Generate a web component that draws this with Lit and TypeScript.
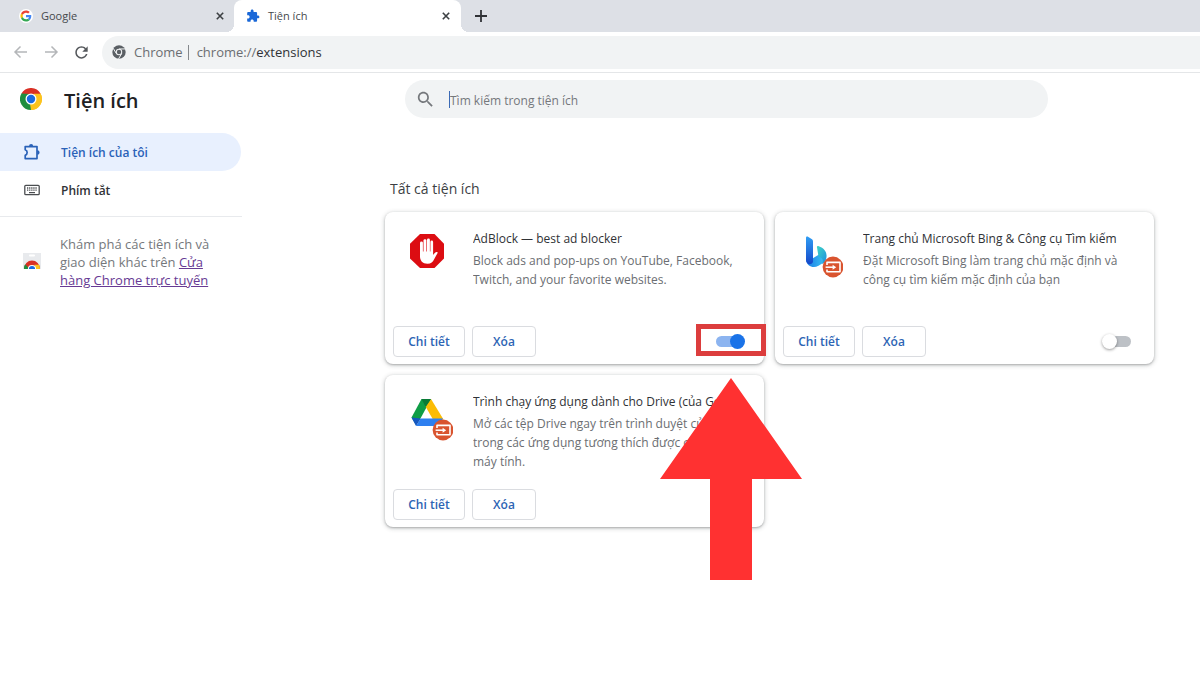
import { LitElement, html, css, svg, nothing } from "lit";
import { customElement, property } from "lit/decorators.js";

const googleG = html`<svg class="ico16" viewBox="0 0 48 48" aria-hidden="true">
  <circle cx="24" cy="24" r="24" fill="#fff" />
  <g transform="translate(5 5) scale(.79)">
    <path fill="#EA4335" d="M24 9.5c3.54 0 6.71 1.22 9.21 3.6l6.85-6.85C35.9 2.38 30.47 0 24 0 14.62 0 6.51 5.38 2.56 13.22l7.98 6.19C12.43 13.72 17.74 9.5 24 9.5z" />
    <path fill="#4285F4" d="M46.98 24.55c0-1.57-.15-3.09-.38-4.55H24v9.02h12.94c-.58 2.96-2.26 5.48-4.78 7.18l7.73 6c4.51-4.18 7.09-10.36 7.09-17.65z" />
    <path fill="#FBBC05" d="M10.53 28.59c-.48-1.45-.76-2.99-.76-4.59s.27-3.14.76-4.59l-7.98-6.19C.92 16.46 0 20.12 0 24c0 3.88.92 7.54 2.56 10.78l7.97-6.19z" />
    <path fill="#34A853" d="M24 48c6.48 0 11.93-2.13 15.89-5.81l-7.73-6c-2.15 1.45-4.92 2.3-8.16 2.3-6.26 0-11.57-4.22-13.47-9.91l-7.98 6.19C6.51 42.62 14.62 48 24 48z" />
  </g>
</svg>`;

const puzzle = html`<svg class="ico16" viewBox="0 0 24 24" aria-hidden="true">
  <path fill="#1a68d8" d="M20.5 11H19V7c0-1.1-.9-2-2-2h-4V3.5C13 2.12 11.88 1 10.5 1S8 2.12 8 3.5V5H4c-1.1 0-1.99.9-1.99 2v3.8H3.5c1.49 0 2.7 1.21 2.7 2.7s-1.21 2.7-2.7 2.7H2V20c0 1.1.9 2 2 2h3.8v-1.5c0-1.49 1.21-2.7 2.7-2.7 1.49 0 2.7 1.21 2.7 2.7V22H17c1.1 0 2-.9 2-2v-4h1.5c1.38 0 2.5-1.12 2.5-2.5S21.88 11 20.5 11z" />
</svg>`;

const closeIcon = html`<svg width="8" height="8" viewBox="0 0 8 8" aria-hidden="true">
  <path d="M.8.8l6.4 6.4M7.2.8L.8 7.2" stroke="#3c4043" stroke-width="1.6" />
</svg>`;

const chromeColor = html`<svg width="22" height="22" viewBox="0 0 48 48" aria-hidden="true">
  <path fill="#d93025" d="M24 24L3.2 12A24 24 0 0 1 44.8 12z" />
  <path fill="#fcc31e" d="M24 24L44.8 12A24 24 0 0 1 24 48z" />
  <path fill="#1e8e3e" d="M24 24V48A24 24 0 0 1 3.2 12z" />
  <path fill="#d93025" d="M24 12.5H45L34 30z" />
  <path fill="#fcc31e" d="M34 29.8L24 48 22 35.4z" />
  <path fill="#1e8e3e" d="M14 29.8L3.2 12 22 13 14 18z" />
  <path fill="#fcc31e" d="M45 12.5H30L34 30 24 48A24 24 0 0 0 45 12.5z" />
  <circle cx="24" cy="24" r="12" fill="#fff" />
  <circle cx="24" cy="24" r="9.2" fill="#1a6be0" />
</svg>`;

const chromeGrey = html`<svg width="14" height="14" viewBox="0 0 48 48" aria-hidden="true">
  <circle cx="24" cy="24" r="23" fill="#5a5f64" />
  <circle cx="24" cy="24" r="11" fill="#f1f3f4" />
  <circle cx="24" cy="24" r="7.5" fill="#5a5f64" />
  <path d="M24 13.5H46M33.2 29.2L22.5 47.5M14.8 29.2L4 11" stroke="#f1f3f4" stroke-width="3.4" />
</svg>`;

const extOutline = html`<svg width="18" height="18" viewBox="0 0 18 18" aria-hidden="true">
  <path fill="none" stroke="#2a62b8" stroke-width="1.7" stroke-linejoin="round" d="M2.2 3.6H14V15.6H2.2V12.4C4.8 11.6 4.8 7.6 2.2 6.8z" />
  <path fill="#2a62b8" d="M6 3.4a2.1 2.4 0 0 1 4.2 0zM14.2 7.2a2.4 2.3 0 0 1 0 4.6z" />
</svg>`;

const keyboardIcon = html`<svg width="18" height="12" viewBox="0 0 18 12" aria-hidden="true">
  <rect x="1.8" y="1.3" width="14.4" height="9.4" rx="1" fill="none" stroke="#4a4d50" stroke-width="1.3" />
  <path d="M4 4h10M4 6.2h10" stroke="#4a4d50" stroke-width="1.3" stroke-dasharray="1.3 .8" />
  <path d="M6 8.6h6" stroke="#4a4d50" stroke-width="1.2" />
</svg>`;

const storeIcon = html`<svg width="18" height="17" viewBox="0 0 18 17" aria-hidden="true">
  <path fill="#e8eaed" d="M0 1h18v16H0z" />
  <rect x="6" y="2.6" width="6" height="1.8" rx=".9" fill="#fff" />
  <path fill="#d93025" d="M1 17a8 8.4 0 0 1 16 0z" />
  <path fill="#1e8e3e" d="M1 17c0-2 .4-3.4 1.2-4.7L6.5 17z" />
  <path fill="#fcc31e" d="M12 17l-.5-4.2h4.6c.6 1.2.9 2.6.9 4.2z" />
  <path fill="#fff" d="M4.9 17a4.1 4.1 0 0 1 8.2 0z" />
  <path fill="#1a6be0" d="M5.9 17a3.1 3.1 0 0 1 6.2 0z" />
</svg>`;

const badge = svg`<circle cx="35" cy="33" r="10.4" fill="#d9542f" />
  <path d="M29 31v-2.6h13v9.4H29V35.4" fill="none" stroke="#fff" stroke-width="1.6" stroke-linejoin="round" />
  <path d="M27.6 33.2h8" stroke="#fff" stroke-width="1.5" />
  <path d="M34.6 30.7l3.6 2.5-3.6 2.5z" fill="#fff" />`;

const adblockArt = html`<svg width="46" height="46" viewBox="0 0 46 46" aria-hidden="true">
  <path fill="#dc0d12" d="M13 0H27.5L37 9.8V24.6L27.5 34H13L3 24.6V9.8z" />
  <g fill="#fff" transform="translate(0 -1)">
    <rect x="13" y="8.4" width="2.9" height="16" rx="1.4" />
    <rect x="16.5" y="6.2" width="2.9" height="18" rx="1.4" />
    <rect x="20" y="5.6" width="2.9" height="18" rx="1.4" />
    <rect x="23.4" y="7.6" width="2.7" height="18" rx="1.3" />
    <path d="M13 18.5h13v3.4c1.3-1.6 2.2-2.7 3.7-3 .8-.1 1.2.4.9 1L27 26.4c-1.2 2.4-2.8 4.3-6.5 4.3-5 0-7.5-2.8-7.5-7.4z" />
  </g>
</svg>`;

const bingArt = html`<svg width="46" height="46" viewBox="0 0 46 46" aria-hidden="true">
  <defs>
    <linearGradient id="stem" x1="0" y1="0" x2="0" y2="1"><stop offset="0" stop-color="#2f9df4" /><stop offset="1" stop-color="#1548c9" /></linearGradient>
    <linearGradient id="bowl" x1="0" y1="0" x2="1" y2="1"><stop offset="0" stop-color="#3fd6c4" /><stop offset="1" stop-color="#1b8de0" /></linearGradient>
    <linearGradient id="base" x1="0" y1="0" x2="1" y2="0"><stop offset="0" stop-color="#1a7ae6" /><stop offset="1" stop-color="#3cc5f2" /></linearGradient>
  </defs>
  <g transform="translate(1 0)">
    <path fill="url(#base)" d="M8 26c1 6 7 9 12.5 5.8L27.5 27.5 21 20.5 12 26z" />
    <path fill="url(#stem)" d="M8 4c0-1.6 1.2-1.8 2.4-1l3.2 2c1 .6 1.4 1.4 1.4 2.6V28c-2 3.8-7 2.4-7-2z" />
    <path fill="url(#bowl)" d="M19 13.5c-.5-1.2.6-1.8 1.8-1.2 5.2 2 8.2 5.2 7.7 10.7-.2 3-1.8 5.6-4.5 7.2 1.7-3.6.5-5.7-1.5-6.7l-2-1z" />
  </g>
  <g transform="translate(1 0)">${badge}</g>
</svg>`;

const driveArt = html`<svg width="46" height="46" viewBox="0 0 46 46" aria-hidden="true">
  <path fill="#0f9d46" d="M14.5 2H24L14 20.5 9 28 4.5 20.5z" />
  <path fill="#fbbc05" d="M24 2L36.5 22.5H26L18.5 9.5z" />
  <path fill="#0a7a36" d="M14.5 2H24L18.7 10z" />
  <path fill="#2d7ff0" d="M13.5 21.5H36L31.5 29H9z" />
  <path fill="#1557c0" d="M4.5 20.5L9 29 13.5 21.5z" />
  <g transform="translate(1 0)">${badge}</g>
</svg>`;

@customElement("extension-card")
class ExtensionCard extends LitElement {
  @property() name = "";
  @property() description = "";
  @property({ attribute: false }) art: unknown = nothing;
  @property({ type: Boolean }) on = false;
  @property({ type: Boolean }) marked = false;

  static styles = css`
    :host {
      display: flex;
      flex-direction: column;
      position: relative;
      box-sizing: border-box;
      min-height: 152px;
      padding: 17px 5px 7px 8px;
      border-radius: 8px;
      background: #fff;
      box-shadow: 0 1px 2px rgba(60, 64, 67, 0.3), 0 1px 4px 1px rgba(60, 64, 67, 0.2);
      font-size: 12px;
    }
    :host([marked]) { z-index: 1; }
    .top { display: flex; flex: 1; padding-left: 14px; }
    .art { flex: none; width: 46px; height: 46px; margin: 5px 20px 0 0; }
    .art svg { display: block; }
    .copy { flex: 1; min-width: 0; }
    .name {
      margin: 0 0 2px;
      font-size: 12px;
      line-height: 20px;
      font-weight: 400;
      color: #303236;
      white-space: nowrap;
      overflow: hidden;
      text-overflow: ellipsis;
    }
    .description {
      margin: 0;
      line-height: 19px;
      max-height: 57px;
      overflow: hidden;
      white-space: pre-line;
      color: #6b6e72;
    }
    .actions { display: flex; align-items: center; gap: 7px; }
    .action {
      height: 31px;
      padding: 0;
      border: 1px solid #dadce0;
      border-radius: 4px;
      background: #fff;
      font: 600 12px "Open Sans", "Noto Sans", sans-serif;
      color: #2d64b4;
    }
    .action.wide { min-width: 72px; }
    .action.narrow { min-width: 64px; }
    .toggle {
      appearance: none;
      position: relative;
      width: 33px;
      height: 15px;
      margin: 0 14px 0 auto;
    }
    .toggle::before {
      content: "";
      position: absolute;
      inset: 2px 4px;
      border-radius: 6px;
      background: #bdc1c6;
    }
    .toggle::after {
      content: "";
      position: absolute;
      left: 0;
      top: 0;
      width: 15px;
      height: 15px;
      border-radius: 50%;
      background: #fff;
      box-shadow: 0 1px 3px rgba(0, 0, 0, 0.4);
    }
    .toggle:checked::before { background: #8cb4f0; }
    .toggle:checked::after { left: auto; right: 0; background: #1a73e8; box-shadow: none; }
    .frame {
      position: absolute;
      right: -2px;
      bottom: 8px;
      box-sizing: border-box;
      width: 70px;
      height: 32px;
      border: 5px solid #dc3d3d;
      pointer-events: none;
    }
    .arrow { position: absolute; right: -38px; top: 166px; pointer-events: none; }
  `;

  render() {
    return html`
      <div class="top">
        <div class="art">${this.art}</div>
        <div class="copy">
          <h3 class="name" id="name">${this.name}</h3>
          <p class="description">${this.description}</p>
        </div>
      </div>
      <div class="actions">
        <button class="action wide">Chi tiết</button>
        <button class="action narrow">Xóa</button>
        <input class="toggle" type="checkbox" role="switch" aria-labelledby="name" .checked=${this.on} />
      </div>
      ${this.marked
        ? html`<div class="frame"></div>
            <svg class="arrow" width="142" height="202" viewBox="0 0 142 202" aria-hidden="true">
              <path fill="#ff3131" d="M71 0L142 101H92V202H50V101H0z" />
            </svg>`
        : nothing}
    `;
  }
}

@customElement("app-root")
class AppRoot extends LitElement {
  static styles = css`
    :host {
      display: block;
      min-height: 100vh;
      background: #fff;
      font-family: "Open Sans", "Noto Sans", sans-serif;
      color: #202124;
    }
    button { padding: 0; border: 0; background: none; font: inherit; color: inherit; }
    svg { display: block; flex: none; }
    .ico16 { width: 14px; height: 14px; }
    .tabs { display: flex; align-items: stretch; height: 32px; background: #dde0e6; }
    .tab {
      display: flex;
      align-items: center;
      box-sizing: border-box;
      width: 234px;
      padding: 0 10px 0 19px;
      font-size: 11px;
      color: #45484c;
    }
    .tab.active {
      position: relative;
      width: 227px;
      padding: 0 11px 0 12px;
      border-radius: 8px 8px 0 0;
      background: #fff;
    }
    .tab.active::before, .tab.active::after {
      content: "";
      position: absolute;
      bottom: 0;
      width: 8px;
      height: 8px;
    }
    .tab.active::before { right: 100%; background: radial-gradient(circle at 0 0, transparent 8px, #fff 8px); }
    .tab.active::after { left: 100%; background: radial-gradient(circle at 100% 0, transparent 8px, #fff 8px); }
    .tab-name { display: flex; align-items: center; flex: 1; gap: 8px; }
    .tab-name span { padding-bottom: 2px; }
    .new-tab { padding: 0 14px; }
    .toolbar {
      display: flex;
      align-items: center;
      height: 40px;
      padding-left: 13px;
      border-bottom: 1px solid #e4e6e8;
    }
    .nav { display: flex; gap: 14px; align-items: center; margin-right: 12px; }
    .address {
      display: flex;
      align-items: center;
      flex: 1;
      height: 33px;
      padding-left: 10px;
      border-radius: 17px 0 0 17px;
      background: #f1f3f4;
      font-size: 13px;
      color: #6b6e72;
    }
    .origin { margin: 0 5px 0 8px; }
    .bar { width: 1px; height: 15px; margin-right: 8px; background: #85888c; }
    .path { color: #303236; }
    .page { display: grid; grid-template-columns: 242px 1fr; }
    .brand { display: flex; align-items: center; gap: 22px; height: 52px; padding: 0 0 8px 20px; }
    .brand h1 { margin: 0; padding-top: 4px; font-size: 20px; line-height: 28px; font-weight: 600; }
    .menu { padding-bottom: 7px; border-bottom: 1px solid #e8eaed; }
    .item {
      display: flex;
      align-items: center;
      gap: 20px;
      height: 38px;
      padding-left: 23px;
      margin-right: 1px;
      border-radius: 0 19px 19px 0;
      font-size: 12px;
      font-weight: 600;
      color: #303236;
      text-decoration: none;
    }
    .item.current { background: #e8f0fe; color: #2a62b8; }
    .store { display: flex; align-items: flex-start; gap: 19px; padding: 18px 15px 0 23px; }
    .store svg { margin-top: 17px; }
    .store p { margin: 0; font-size: 13px; line-height: 18px; color: #75787c; }
    .store a { color: #673a94; }
    .main { padding: 7px 46px 24px 143px; }
    .search {
      display: flex;
      align-items: center;
      height: 38px;
      margin: 0 106px 0 20px;
      padding-left: 12px;
      border-radius: 19px;
      background: #f1f3f4;
    }
    .caret { width: 1px; height: 17px; margin-left: 15px; background: #3b6ab5; }
    .search input {
      flex: 1;
      min-width: 0;
      padding: 2px 0 0;
      border: 0;
      outline: 0;
      background: none;
      font: 12px "Open Sans", "Noto Sans", sans-serif;
      color: #303236;
    }
    .search input::placeholder { color: #75787c; opacity: 1; }
    .main h2 { margin: 61px 0 13px 5px; font-size: 14px; line-height: 20px; font-weight: 400; color: #3c4043; }
    .cards { display: grid; grid-template-columns: repeat(auto-fill, minmax(340px, 1fr)); gap: 11px; }
  `;

  render() {
    return html`
      <div class="tabs">
        <div class="tab">
          <button class="tab-name">${googleG}<span>Google</span></button>
          <button aria-label="Đóng">${closeIcon}</button>
        </div>
        <div class="tab active">
          <button class="tab-name">${puzzle}<span>Tiện ích</span></button>
          <button aria-label="Đóng">${closeIcon}</button>
        </div>
        <button class="new-tab" aria-label="Thẻ mới">
          <svg width="12" height="12" viewBox="0 0 12 12"><path d="M6 0v12M0 6h12" stroke="#303236" stroke-width="1.8" /></svg>
        </button>
      </div>
      <div class="toolbar">
        <div class="nav">
          <button aria-label="Quay lại">
            <svg width="16" height="14" viewBox="0 0 16 14"><path d="M14 7H2.5M7.5 1.5L2 7l5.5 5.5" fill="none" stroke="#b4b6b9" stroke-width="1.5" /></svg>
          </button>
          <button aria-label="Tiến">
            <svg width="16" height="14" viewBox="0 0 16 14"><path d="M2 7h11.5M8.5 1.5L14 7l-5.5 5.5" fill="none" stroke="#b4b6b9" stroke-width="1.5" /></svg>
          </button>
          <button aria-label="Tải lại">
            <svg width="17" height="17" viewBox="1 1 22 22"><path fill="#55585c" d="M17.65 6.35C16.2 4.9 14.21 4 12 4c-4.42 0-7.99 3.58-7.99 8s3.57 8 7.99 8c3.73 0 6.84-2.55 7.73-6h-2.08c-.82 2.33-3.04 4-5.65 4-3.31 0-6-2.69-6-6s2.69-6 6-6c1.66 0 3.14.69 4.22 1.78L13 11h7V4l-2.35 2.35z" /></svg>
          </button>
        </div>
        <div class="address">
          ${chromeGrey}
          <span class="origin">Chrome</span><span class="bar"></span>
          <span>chrome://<span class="path">extensions</span></span>
        </div>
      </div>
      <div class="page">
        <aside>
          <div class="brand">${chromeColor}<h1>Tiện ích</h1></div>
          <nav class="menu">
            <a class="item current" href="#mine">${extOutline}Tiện ích của tôi</a>
            <a class="item" href="#shortcuts">${keyboardIcon}Phím tắt</a>
          </nav>
          <div class="store">
            ${storeIcon}
            <p>Khám phá các tiện ích và giao diện khác trên <a href="#store">Cửa hàng Chrome trực tuyến</a></p>
          </div>
        </aside>
        <main class="main">
          <div class="search">
            <svg width="17" height="17" viewBox="2 2 20 20" aria-hidden="true"><path fill="#75787c" d="M15.5 14h-.79l-.28-.27C15.41 12.59 16 11.11 16 9.5 16 5.91 13.09 3 9.5 3S3 5.91 3 9.5 5.91 16 9.5 16c1.61 0 3.09-.59 4.23-1.57l.27.28v.79l5 4.99L20.49 19l-4.99-5zm-6 0C7.01 14 5 11.99 5 9.5S7.01 5 9.5 5 14 7.01 14 9.5 11.99 14 9.5 14z" /></svg>
            <span class="caret"></span>
            <input type="text" aria-label="Tìm kiếm trong tiện ích" placeholder="Tìm kiếm trong tiện ích" />
          </div>
          <h2>Tất cả tiện ích</h2>
          <div class="cards">
            <extension-card
              name="AdBlock — best ad blocker"
              description="Block ads and pop-ups on YouTube, Facebook, Twitch, and your favorite websites."
              .art=${adblockArt}
              on
              marked
            ></extension-card>
            <extension-card
              name="Trang chủ Microsoft Bing &amp; Công cụ Tìm kiếm"
              description="Đặt Microsoft Bing làm trang chủ mặc định và&#10;công cụ tìm kiếm mặc định của bạn"
              .art=${bingArt}
            ></extension-card>
            <extension-card
              name="Trình chạy ứng dụng dành cho Drive (của Goo…"
              description="Mở các tệp Drive ngay trên trình duyệt của bạn&#10;trong các ứng dụng tương thích được cài đặt trên máy tính."
              .art=${driveArt}
              on
            ></extension-card>
          </div>
        </main>
      </div>
    `;
  }
}
